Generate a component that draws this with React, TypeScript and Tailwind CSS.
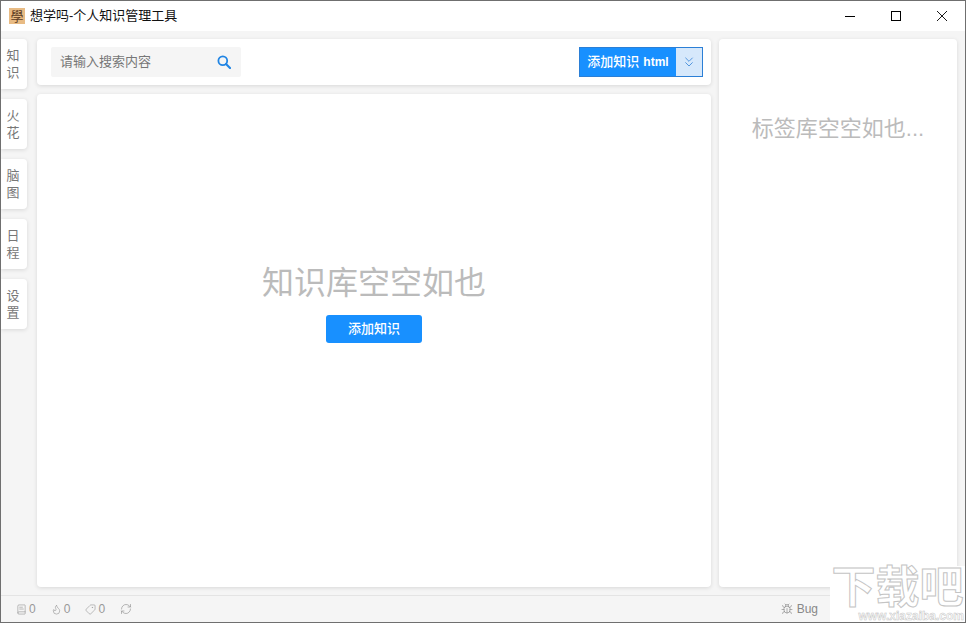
import { ChevronsDown, RefreshCw, Bug, BookText, Flame, Tag } from "lucide-react";

const font = { fontFamily: '"Liberation Sans", "Noto Sans CJK SC", sans-serif' };

const tabs = [
  ["知", "识"],
  ["火", "花"],
  ["脑", "图"],
  ["日", "程"],
  ["设", "置"],
];

const stats = [
  { icon: BookText, cls: "h-[11px] w-[11px]" },
  { icon: Flame, cls: "h-[11px] w-[11px]" },
  { icon: Tag, cls: "h-[11px] w-[11px] -scale-x-100" },
];

export default function App() {
  return (
    <div
      style={font}
      className="relative flex h-[623px] w-[966px] flex-col overflow-hidden border border-[#6f6f6f] bg-[#f5f5f5]"
    >
      {/* Title bar */}
      <div className="flex h-[30px] shrink-0 items-center bg-white pl-[8px]">
        <div className="flex h-[16px] w-[16px] items-center justify-center bg-[#e8bb84] text-[13px] leading-none text-[#5a3a22]">
          學
        </div>
        <span className="ml-[5px] text-[13px] text-[#111]">想学吗-个人知识管理工具</span>
        <div className="ml-auto flex items-center">
          <button className="flex h-[30px] w-[46px] items-center justify-center">
            <svg width="10" height="10" viewBox="0 0 10 10">
              <path d="M0 5.5H10" stroke="#000" strokeWidth="1" />
            </svg>
          </button>
          <button className="flex h-[30px] w-[46px] items-center justify-center">
            <svg width="10" height="10" viewBox="0 0 10 10" fill="none">
              <rect x="0.5" y="0.5" width="9" height="9" stroke="#000" strokeWidth="1" />
            </svg>
          </button>
          <button className="flex h-[30px] w-[46px] items-center justify-center">
            <svg width="10" height="10" viewBox="0 0 10 10">
              <path d="M0 0L10 10M10 0L0 10" stroke="#000" strokeWidth="0.9" />
            </svg>
          </button>
        </div>
      </div>

      {/* Body */}
      <div className="flex min-h-0 flex-1 pt-[8px]">
        <nav className="flex w-[36px] shrink-0 flex-col gap-[10px]">
          {tabs.map((t) => (
            <div
              key={t[0]}
              className="flex h-[50px] w-[26px] flex-col items-center justify-center rounded-r-[4px] bg-white pr-[2px] text-[13px] leading-[17px] text-[#777] shadow-[0_1px_4px_rgba(0,0,0,0.12)]"
            >
              <span>{t[0]}</span>
              <span>{t[1]}</span>
            </div>
          ))}
        </nav>

        <main className="flex w-[674px] shrink-0 flex-col gap-[9px]">
          <div className="flex h-[46px] shrink-0 items-center justify-between rounded-[4px] bg-white pl-[14px] pr-[8px] shadow-[0_1px_4px_rgba(0,0,0,0.12)]">
            <div className="flex h-[30px] w-[190px] items-center justify-between rounded-[2px] bg-[#f5f5f5] pl-[9px] pr-[10px]">
              <span className="text-[13px] text-[#777]">请输入搜索内容</span>
              <svg width="14" height="14" viewBox="0 0 14 14" fill="none" stroke="#2185e4">
                <circle cx="5.8" cy="5.8" r="4.4" strokeWidth="1.8" />
                <path d="M9 9L13 13" strokeWidth="2.2" strokeLinecap="round" />
              </svg>
            </div>
            <div className="flex h-[30px] w-[124px] border border-[#2b7fd6]">
              <div className="flex flex-1 items-center justify-center gap-[4px] bg-[#1890ff] text-white">
                <span className="text-[13px] font-medium">添加知识</span>
                <span className="text-[12px] font-bold">html</span>
              </div>
              <div className="flex w-[26px] items-center justify-center bg-[#d6e8fb]">
                <ChevronsDown className="h-[16px] w-[16px] text-[#4a90dc]" strokeWidth={1.4} />
              </div>
            </div>
          </div>

          <div className="flex min-h-0 flex-1 flex-col items-center rounded-[4px] bg-white pt-[165px] shadow-[0_1px_4px_rgba(0,0,0,0.12)]">
            <div className="text-[32px] leading-[48px] text-[#bbb]">知识库空空如也</div>
            <button className="mt-[8px] h-[28px] w-[96px] rounded-[3px] bg-[#1890ff] text-[13px] font-medium text-white">
              添加知识
            </button>
          </div>
        </main>

        <aside className="ml-[8px] w-[238px] shrink-0 rounded-[4px] bg-white pt-[74px] text-center text-[22px] leading-[32px] text-[#bbb] shadow-[0_1px_4px_rgba(0,0,0,0.12)]">
          标签库空空如也...
        </aside>
      </div>

      {/* Status bar */}
      <div className="mt-[8px] flex h-[27px] shrink-0 items-center border-t border-[#e4e4e4] pl-[15px] pr-[147px] text-[12px] text-[#999]">
        <div className="flex items-center gap-[15px]">
          {stats.map((s, i) => (
            <span key={i} className="flex items-center gap-[2px]">
              <s.icon className={s.cls} strokeWidth={1.4} />0
            </span>
          ))}
          <RefreshCw className="h-[12px] w-[12px]" strokeWidth={1.4} />
        </div>
        <span className="ml-auto flex items-center gap-[4px] text-[#888]">
          <Bug className="h-[12px] w-[12px]" strokeWidth={1.3} />
          Bug
        </span>
      </div>

      {/* Watermark */}
      <div className="absolute bottom-0 right-0 flex h-[56px] w-[135px] flex-col items-end bg-white">
        <div
          className="w-full text-center text-[44px] font-bold leading-[44px] text-white"
          style={{ WebkitTextStroke: "1px #c4c4c4" }}
        >
          下载吧
        </div>
        <div
          className="pr-[1px] text-[12px] font-bold leading-[12px] text-white"
          style={{ WebkitTextStroke: "0.5px #c4c4c4" }}
        >
          www.xiazaiba.com
        </div>
      </div>
    </div>
  );
}
